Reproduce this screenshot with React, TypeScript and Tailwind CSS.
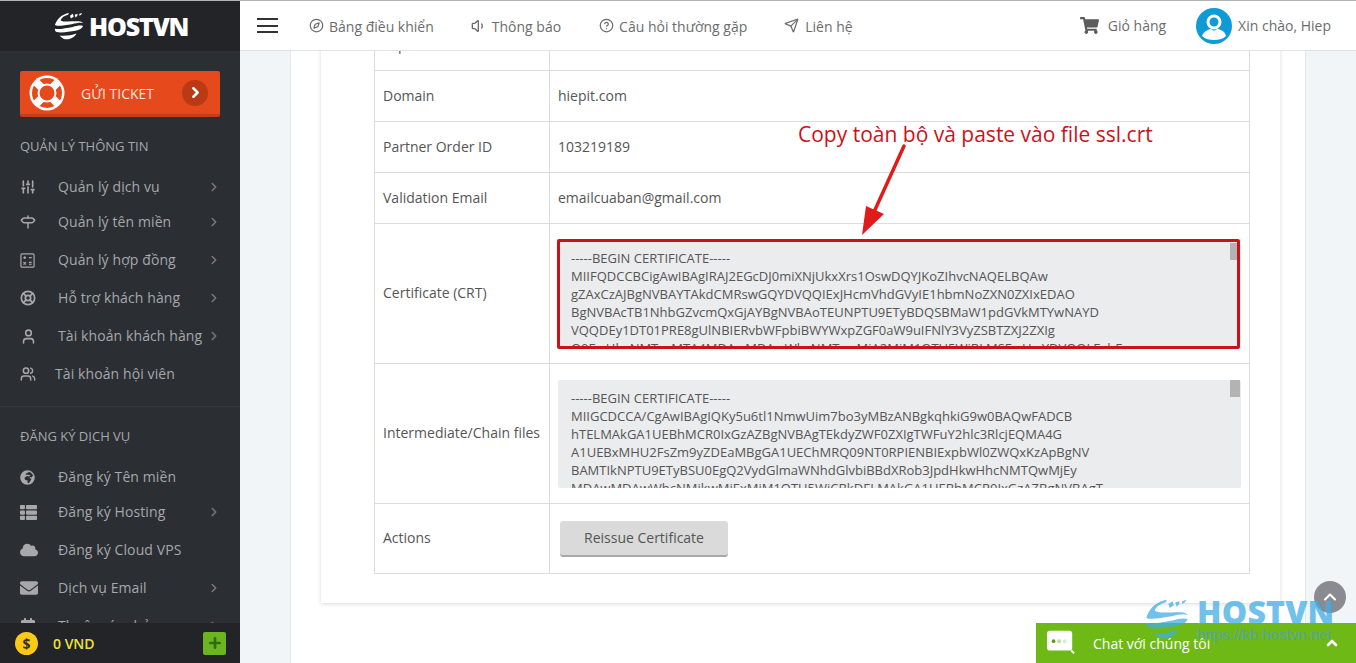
import {
  SlidersVertical,
  Signpost,
  LifeBuoy,
  User,
  Users,
  ChevronRight,
  ChevronUp,
  Compass,
  Volume1,
  CircleHelp,
  Send,
  Plus,
} from "lucide-react"
import { FaCloud, FaEnvelope, FaGlobeAfrica, FaShoppingCart, FaThList, FaCalendarAlt } from "react-icons/fa"

function CalcIcon() {
  return (
    <svg viewBox="0 0 16 16" width="15" height="15" fill="none" stroke="currentColor" strokeWidth="1.3">
      <rect x="1" y="1" width="14" height="14" rx="1" />
      <path d="M3.5 5h3M5 3.5v3M9.5 5h3M3.7 9.7l2.6 2.6M6.3 9.7l-2.6 2.6M9.5 10h3M9.5 12h3" />
    </svg>
  )
}

const manage = [
  { icon: <SlidersVertical size={16} strokeWidth={2.4} />, label: "Quản lý dịch vụ", more: true, tight: true },
  { icon: <Signpost size={16} strokeWidth={2.2} />, label: "Quản lý tên miền", more: true },
  { icon: <CalcIcon />, label: "Quản lý hợp đồng", more: true },
  { icon: <LifeBuoy size={16} strokeWidth={2.6} />, label: "Hỗ trợ khách hàng", more: true },
  { icon: <User size={17} strokeWidth={2.2} />, label: "Tài khoản khách hàng", more: true },
  { icon: <Users size={16} strokeWidth={2.2} />, label: "Tài khoản hội viên", shift: true },
]

const signup = [
  { icon: <FaGlobeAfrica size={15} />, label: "Đăng ký Tên miền", tight: true },
  { icon: <FaThList size={17} />, label: "Đăng ký Hosting", more: true },
  { icon: <FaCloud size={18} />, label: "Đăng ký Cloud VPS" },
  { icon: <FaEnvelope size={18} />, label: "Dịch vụ Email", more: true },
  { icon: <FaCalendarAlt size={16} />, label: "Thuê máy chủ", more: true },
]

const crt = [
  "-----BEGIN CERTIFICATE-----",
  "MIIFQDCCBCigAwIBAgIRAJ2EGcDJ0miXNjUkxXrs1OswDQYJKoZIhvcNAQELBQAw",
  "gZAxCzAJBgNVBAYTAkdCMRswGQYDVQQIExJHcmVhdGVyIE1hbmNoZXN0ZXIxEDAO",
  "BgNVBAcTB1NhbGZvcmQxGjAYBgNVBAoTEUNPTU9ETyBDQSBMaW1pdGVkMTYwNAYD",
  "VQQDEy1DT01PRE8gUlNBIERvbWFpbiBWYWxpZGF0aW9uIFNlY3VyZSBTZXJ2ZXIg",
  "Q0EwHhcNMTcxMTA4MDAwMDAwWhcNMTgwMjA2MjM1OTU5WjBLMSEwHwYDVQQLExhE",
]

const chain = [
  "-----BEGIN CERTIFICATE-----",
  "MIIGCDCCA/CgAwIBAgIQKy5u6tl1NmwUim7bo3yMBzANBgkqhkiG9w0BAQwFADCB",
  "hTELMAkGA1UEBhMCR0IxGzAZBgNVBAgTEkdyZWF0ZXIgTWFuY2hlc3RlcjEQMA4G",
  "A1UEBxMHU2FsZm9yZDEaMBgGA1UEChMRQ09NT0RPIENBIExpbWl0ZWQxKzApBgNV",
  "BAMTIkNPTU9ETyBSU0EgQ2VydGlmaWNhdGlvbiBBdXRob3JpdHkwHhcNMTQwMjEy",
  "MDAwMDAwWhcNMjkwMjExMjM1OTU5WjCBkDELMAkGA1UEBhMCR0IxGzAZBgNVBAgT",
]

function Globe({ className }: { className: string }) {
  return (
    <svg viewBox="0 0 32 32" className={className} fill="currentColor">
      <path d="M1 15C3 8 9 3 16 2l-1 2c-4 1-7 3-8 6 3 2 11 1 17 1 3 0 6 0 7 2-3-1-7 0-12 1-7 1-16 3-18 1Z" />
      <path d="M1 19c5 1 12-1 19-2 4-1 8-2 11-1-1 3-4 4-8 5-7 1-16 3-21 1-1-1-1-2-1-3Z" />
      <path d="M6 26c5 1 12 0 18-2-2 4-7 7-12 6-2 0-4-2-6-4Z" />
      <path d="M17 5l3-2 1 3-3 2ZM22 4l3-1 0 2-2 2ZM27 3l3-1-1 2-2 1Z" />
    </svg>
  )
}

function MenuItem({ item }: { item: any }) {
  return (
    <div className={`flex h-[38px] items-center text-[#a6a8ab] ${item.tight ? "-mb-[3px]" : ""}`}>
      <span className="flex w-[38px] shrink-0 items-center">{item.icon}</span>
      <span className={`-mt-[2px] flex-1 text-[14px] tracking-[0.1px] ${item.shift ? "-ml-[3px]" : ""}`}>{item.label}</span>
      {item.more && <ChevronRight size={14} strokeWidth={2.6} className="mr-[-1px] text-[#77797d]" />}
    </div>
  )
}

function CertBox({ lines, marked }: { lines: string[]; marked?: boolean }) {
  return (
    <div className="relative">
      <div className="h-[108px] overflow-hidden rounded-[2px] bg-[#ebecee] pl-[13px] pt-[9px] text-[13px] leading-[18px] text-[#555]">
        {lines.map((l) => (
          <div key={l} className="whitespace-nowrap">{l}</div>
        ))}
      </div>
      <div className={`absolute right-px w-[10px] h-[17px] bg-[#b3b3b3] ${marked ? "top-[3px]" : "top-0"}`} />
      {marked && <div className="absolute -left-px -top-px -bottom-px right-px rounded-[2px] border-[3px] border-[#cc1219]" />}
    </div>
  )
}

export default function App() {
  const label = "border border-[#dcdcdc] pl-2 pb-[2px] text-[14px] text-[#555]"
  const value = "border border-[#dcdcdc] pl-2 text-[14px] text-[#555]"

  return (
    <div className="relative flex h-[663px] w-[1356px] flex-col overflow-hidden bg-white font-['Open_Sans',sans-serif]">
      <div className="h-px shrink-0 bg-[#b4b4b4]" />
      <div className="flex min-h-0 flex-1">
        {/* sidebar */}
        <aside className="flex w-[240px] shrink-0 flex-col bg-[#2b2e33]">
          <div className="flex h-[50px] shrink-0 items-center bg-[#222428] pl-[54px] text-white">
            <Globe className="h-[30px] w-[30px]" />
            <span className="ml-[5px] text-[25px] font-extrabold leading-none tracking-[-1.2px]">HOSTVN</span>
          </div>
          <div className="min-h-0 flex-1 overflow-hidden px-5">
            <div className="mt-5 flex h-[46px] items-center rounded-[2px] border-b-[3px] border-[#c53d15] bg-[#e5491c] pl-[9px] pr-[12px] text-white">
              <svg viewBox="0 0 36 36" className="h-[36px] w-[36px] shrink-0">
                <circle cx="18" cy="18" r="17.5" fill="#fff" />
                <circle cx="18" cy="18" r="15" fill="#e5491c" />
                <path d="M7 7l22 22M29 7 7 29" stroke="#fff" strokeWidth="8" />
                <circle cx="18" cy="18" r="8.5" fill="#e5491c" stroke="#fff" strokeWidth="2" />
              </svg>
              <span className="ml-[16px] mt-[1px] flex-1 text-[14px] font-medium text-[#f7e5dd]">GỬI TICKET</span>
              <span className="flex h-[26px] w-[26px] items-center justify-center rounded-full bg-[#b93a14]">
                <ChevronRight size={17} strokeWidth={3.5} />
              </span>
            </div>
            <div className="mt-[19px] h-5 text-[13px] leading-5 text-[#a6a8ab]">QUẢN LÝ THÔNG TIN</div>
            <div className="mt-3">
              {manage.map((m) => (
                <MenuItem key={m.label} item={m} />
              ))}
            </div>
            <div className="-mx-5 mt-[13px] border-t border-[#33363b]" />
            <div className="mt-[19px] h-5 text-[13px] leading-5 text-[#a6a8ab]">ĐĂNG KÝ DỊCH VỤ</div>
            <div className="mt-3">
              {signup.map((m) => (
                <MenuItem key={m.label} item={m} />
              ))}
            </div>
          </div>
          <div className="flex h-10 shrink-0 items-center bg-[#222428] pl-[15px] pr-[14px]">
            <span className="flex h-[23px] w-[23px] items-center justify-center rounded-full border-2 border-dotted border-[#fcc915] bg-[#fcc915] text-[14px] font-bold text-[#33302a]">$</span>
            <span className="ml-[15px] flex-1 text-[14px] font-semibold text-[#ece13c]">0 VND</span>
            <span className="flex h-[23px] w-[23px] items-center justify-center rounded-[2px] bg-[#6cb51f] text-[#2f6b12]">
              <Plus size={16} strokeWidth={4} />
            </span>
          </div>
        </aside>

        {/* main */}
        <div className="flex min-w-0 flex-1 flex-col">
          <header className="flex h-[50px] shrink-0 items-center border-b border-[#dfe3e6] bg-white text-[14px] text-[#6c6c6c]">
            <div className="ml-[17px] flex w-[21px] flex-col gap-[4.5px]">
              <div className="h-[2px] bg-[#333]" />
              <div className="h-[2px] bg-[#333]" />
              <div className="h-[2px] bg-[#333]" />
            </div>
            <div className="ml-[31px] flex items-center gap-[5px]">
              <Compass size={15} />
              <span className="mt-[2px]">Bảng điều khiển</span>
            </div>
            <div className="ml-[37px] flex items-center gap-[5px]">
              <Volume1 size={16} />
              <span className="mt-[2px]">Thông báo</span>
            </div>
            <div className="ml-[38px] flex items-center gap-[5px]">
              <CircleHelp size={15} />
              <span className="mt-[2px]">Câu hỏi thường gặp</span>
            </div>
            <div className="ml-[37px] flex items-center gap-[6px]">
              <Send size={15} />
              <span className="mt-[2px]">Liên hệ</span>
            </div>
            <div className="ml-auto flex items-center">
              <FaShoppingCart size={19} className="text-[#5c5c5c]" />
              <span className="ml-[9px]">Giỏ hàng</span>
              <span className="ml-[30px] flex h-9 w-9 items-center justify-center overflow-hidden rounded-full bg-[#0f9bd7]">
                <svg viewBox="0 0 36 36" className="h-9 w-9" fill="none">
                  <circle cx="18" cy="14" r="6" stroke="#fff" strokeWidth="3" />
                  <path d="M6 28c2-5 7-7 9-7 2 2 4 2 6 0 3 0 8 2 9 7-3 3-8 4-12 4s-9-1-12-4Z" fill="#fff" />
                </svg>
              </span>
              <span className="ml-[6px] mr-[25px]">Xin chào, Hiep</span>
            </div>
          </header>

          <div className="min-h-0 flex-1 overflow-hidden bg-[#f1f5f8] pl-[50px] pr-[50px]">
            <div className="flow-root h-full border-x border-[#e6e9ec] bg-white pl-[30px] pr-[25px]">
              <div className="-mt-[32px] h-[584px] bg-white px-[53px] shadow-[0_1px_4px_rgba(0,0,0,0.15)]">
                <table className="w-[876px] table-fixed border-collapse">
                  <tbody>
                    <tr className="h-[51px]">
                      <td className={`${label} w-[175px]`}>Expires</td>
                      <td className={value}></td>
                    </tr>
                    <tr className="h-[51px]">
                      <td className={label}>Domain</td>
                      <td className={`${value} pb-[2px]`}>hiepit.com</td>
                    </tr>
                    <tr className="h-[51px]">
                      <td className={label}>Partner Order ID</td>
                      <td className={`${value} pb-[2px]`}>103219189</td>
                    </tr>
                    <tr className="h-[51px]">
                      <td className={label}>Validation Email</td>
                      <td className={`${value} pb-[2px]`}>emailcuaban@gmail.com</td>
                    </tr>
                    <tr className="h-[140px]">
                      <td className={label}>Certificate (CRT)</td>
                      <td className={`${value} pr-2`}><CertBox lines={crt} marked /></td>
                    </tr>
                    <tr className="h-[140px]">
                      <td className={label}>Intermediate/Chain files</td>
                      <td className={`${value} pr-2`}><CertBox lines={chain} /></td>
                    </tr>
                    <tr className="h-[70px]">
                      <td className={label}>Actions</td>
                      <td className={value}>
                        <button className="ml-[2px] h-[36px] w-[168px] rounded-[3px] border-b-2 border-[#a9a9a9] bg-[#dadada] text-[14px] text-[#555]">
                          Reissue Certificate
                        </button>
                      </td>
                    </tr>
                  </tbody>
                </table>
              </div>
            </div>
          </div>
        </div>
      </div>

      {/* annotation over the screenshot */}
      <div className="absolute left-[798px] top-[120px] whitespace-nowrap text-[21px] leading-7 text-[#cc1219]">
        Copy toàn bộ và paste vào file ssl.crt
      </div>
      <svg className="absolute left-[850px] top-[140px]" width="64" height="100" viewBox="0 0 64 100">
        <path d="M54 6 24 72" stroke="#e01b1b" strokeWidth="3.5" strokeLinecap="round" />
        <path d="M12 95 16 66 34 74Z" fill="#e01b1b" />
      </svg>

      {/* chat + back to top */}
      <div className="absolute bottom-0 right-0 flex h-10 w-[320px] items-center bg-[#6fb917] pl-[10px] pr-[16px] text-white">
        <svg viewBox="0 0 32 30" className="h-[28px] w-[30px]" fill="none">
          <rect x="1" y="2" width="27" height="21" rx="3" fill="#fff" />
          <circle cx="8" cy="13" r="2" fill="#5d9a16" />
          <circle cx="14" cy="13" r="2" fill="#bcdca0" />
          <circle cx="20" cy="13" r="2" fill="#dcebd0" />
          <path d="M27 23l3 3" stroke="#fff" strokeWidth="2" />
        </svg>
        <span className="ml-[17px] flex-1 text-[14px]">Chat với chúng tôi</span>
        <ChevronUp size={16} strokeWidth={4} />
      </div>
      <div className="absolute left-[1314px] top-[581px] flex h-8 w-8 items-center justify-center rounded-full bg-[#8a8b90] text-white">
        <ChevronUp size={20} strokeWidth={2.5} />
      </div>

      {/* watermark */}
      <div className="pointer-events-none absolute left-[1145px] top-[597px] flex items-start text-[#41ade6] opacity-75">
        <Globe className="h-[44px] w-[44px]" />
        <div className="ml-[8px]">
          <div className="text-[32px] font-extrabold leading-[30px] tracking-[0.2px]">HOSTVN</div>
          <div className="font-['Liberation_Sans',sans-serif] text-[15px] leading-4 text-[#4a9fd0]">https://kb.hostvn.net</div>
        </div>
      </div>
    </div>
  )
}
